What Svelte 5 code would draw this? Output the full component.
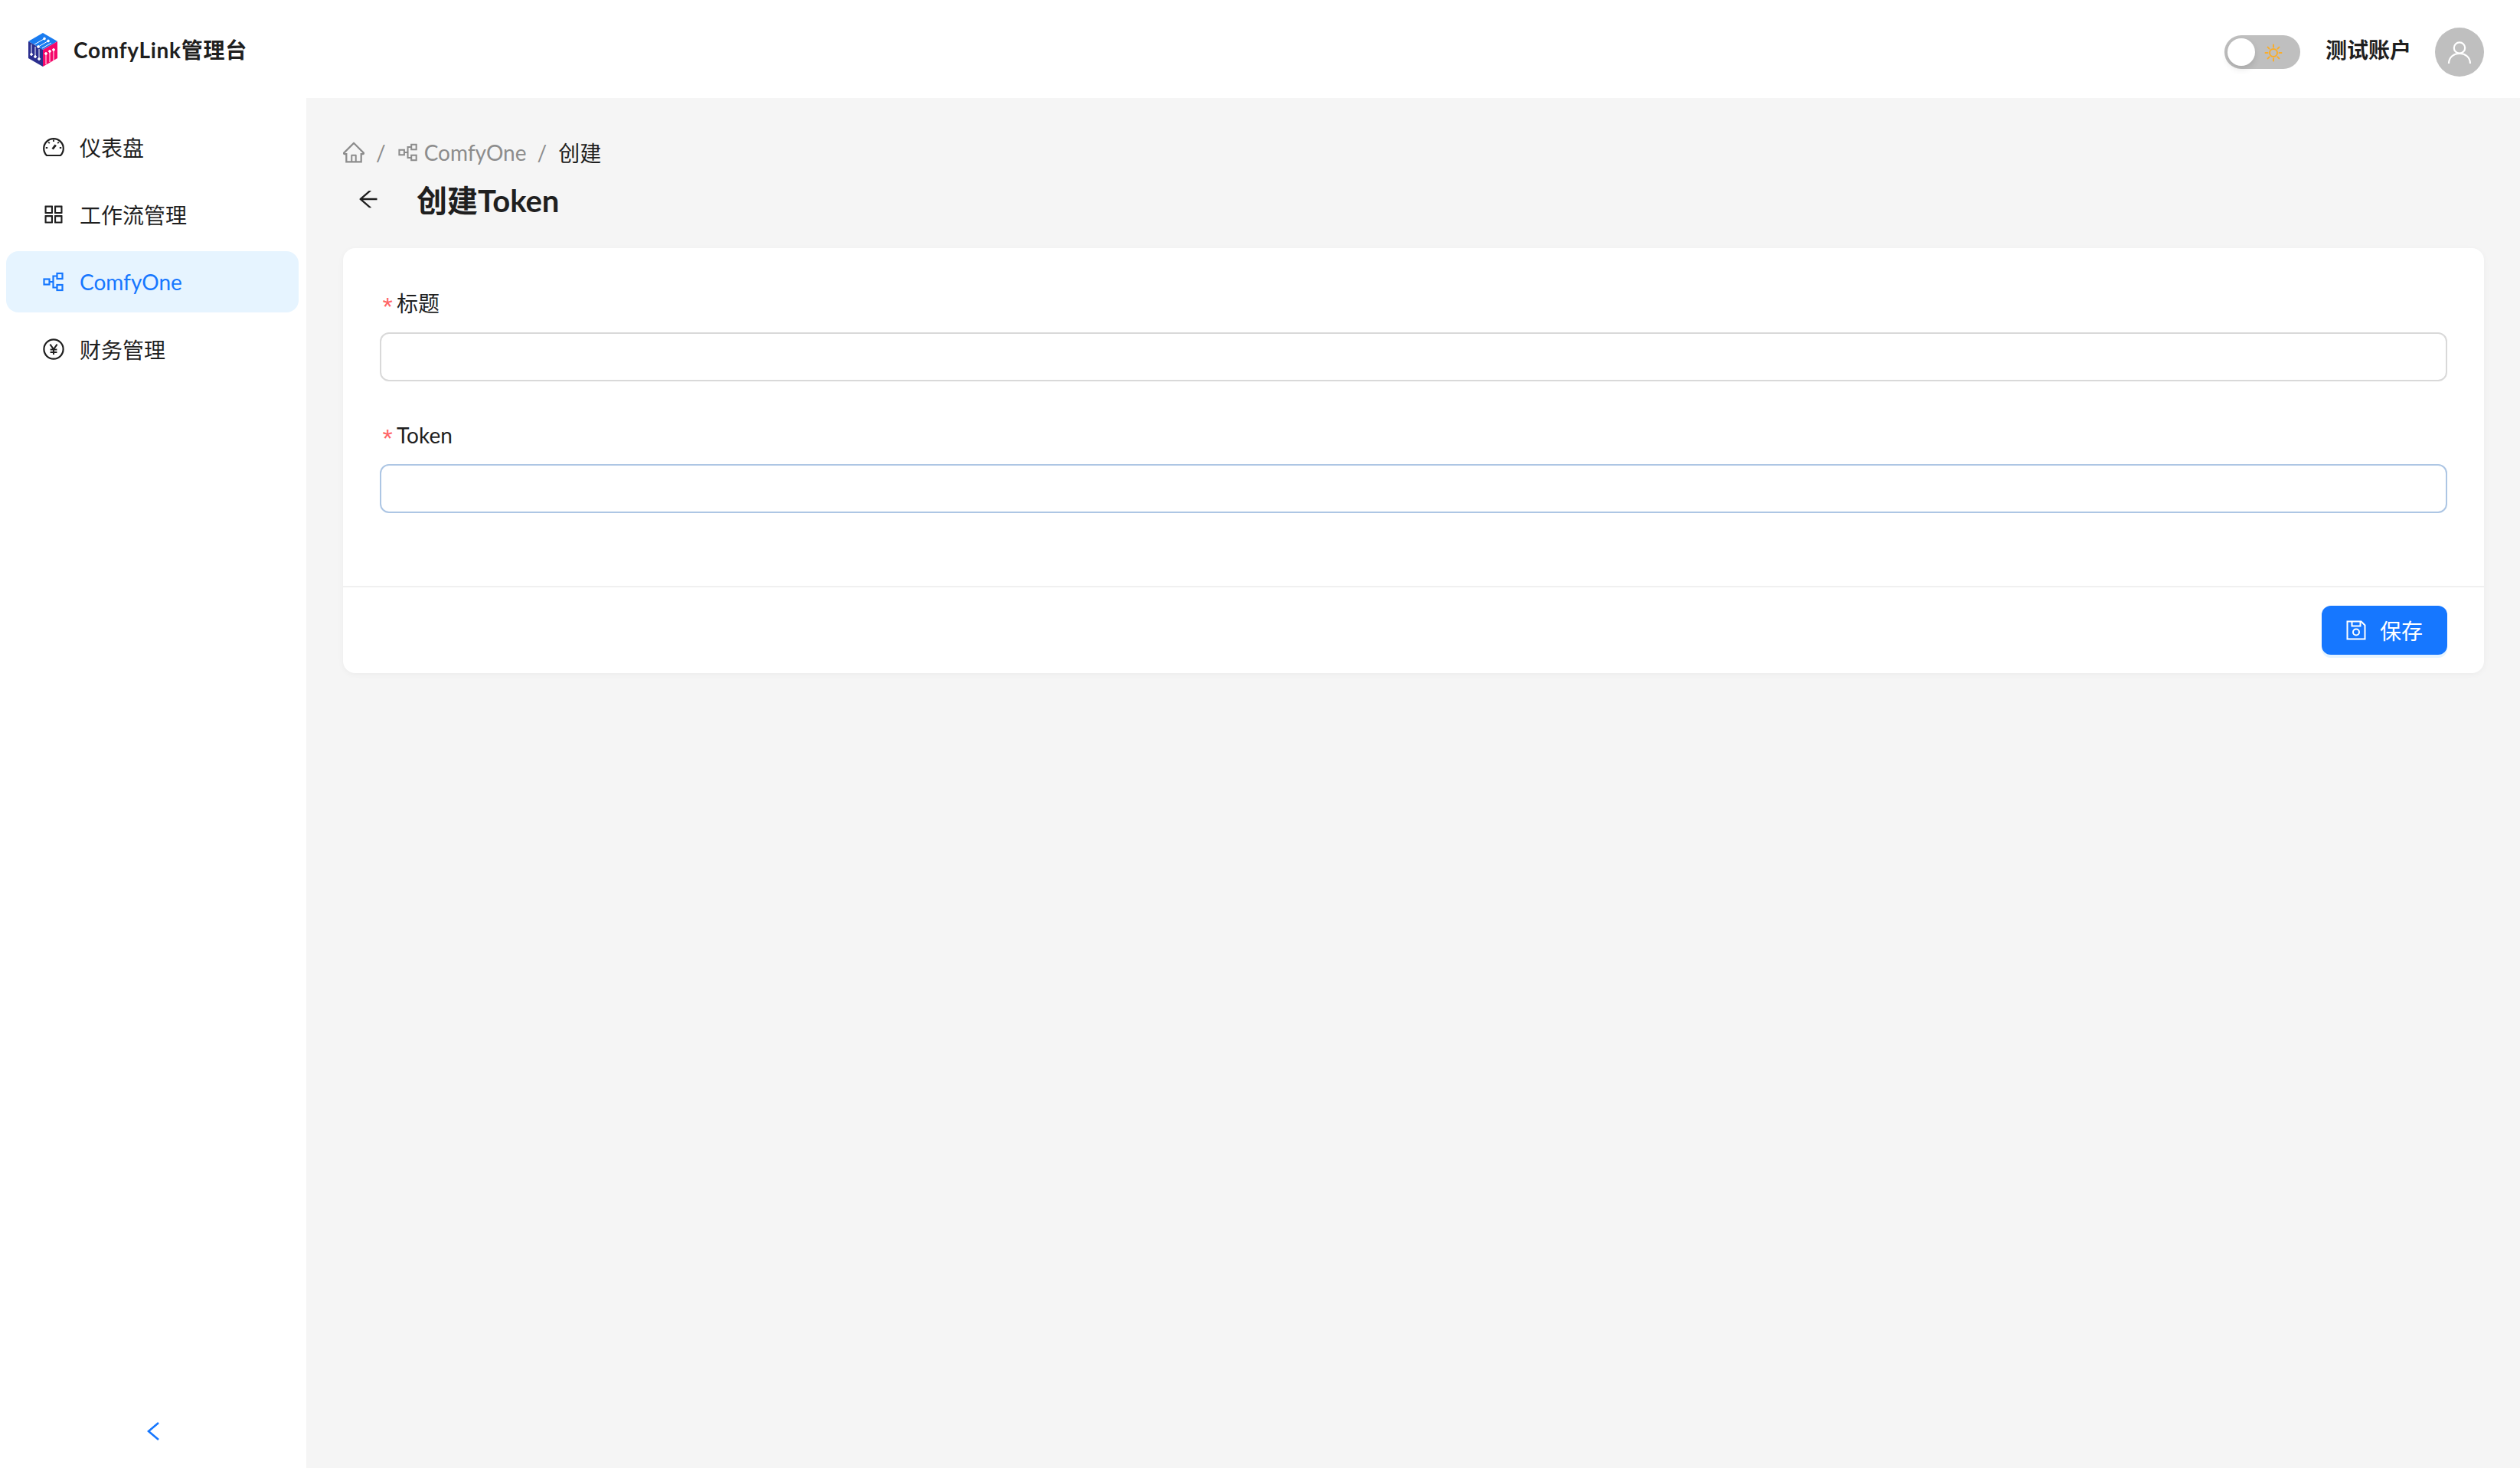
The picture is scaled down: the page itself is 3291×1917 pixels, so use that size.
<script>
  const menu = [
    { key: 'dashboard', label: '仪表盘' },
    { key: 'apps', label: '工作流管理' },
    { key: 'nodes', label: 'ComfyOne', active: true },
    { key: 'yen', label: '财务管理' }
  ];
</script>

{#snippet nodesIcon()}
  <svg class="icon" viewBox="0 0 28 28" fill="none" stroke="currentColor" stroke-width="2.2">
    <rect x="1.5" y="10.5" width="7" height="7" />
    <rect x="18.5" y="3" width="7" height="7" />
    <rect x="18.5" y="18" width="7" height="7" />
    <path d="M8.5 14h5M18.5 6.5h-5v15h5" />
  </svg>
{/snippet}

{#snippet menuIcon(key)}
  {#if key === 'dashboard'}
    <svg class="icon" viewBox="0 0 28 28" fill="none" stroke="currentColor" stroke-width="2.2">
      <path d="M5 25h18a12.8 12.8 0 1 0-18 0z" stroke-linejoin="round" />
      <path d="M12.6 16.6l4.2-5.2" stroke-width="2.8" />
      <path d="M14 4.5v2.4M7.2 7.6l1.6 1.6M20.8 7.6l-1.6 1.6M3.8 15h2.4M21.8 15h2.4" stroke-width="1.8" />
    </svg>
  {:else if key === 'apps'}
    <svg class="icon" viewBox="64 64 896 896" fill="currentColor">
      <path d="M464 144H160c-8.8 0-16 7.2-16 16v304c0 8.8 7.2 16 16 16h304c8.8 0 16-7.2 16-16V160c0-8.8-7.2-16-16-16zm-52 268H212V212h200v200zm452-268H560c-8.8 0-16 7.2-16 16v304c0 8.8 7.2 16 16 16h304c8.8 0 16-7.2 16-16V160c0-8.8-7.2-16-16-16zm-52 268H612V212h200v200zM464 544H160c-8.8 0-16 7.2-16 16v304c0 8.8 7.2 16 16 16h304c8.8 0 16-7.2 16-16V560c0-8.8-7.2-16-16-16zm-52 268H212V612h200v200zm452-268H560c-8.8 0-16 7.2-16 16v304c0 8.8 7.2 16 16 16h304c8.8 0 16-7.2 16-16V560c0-8.8-7.2-16-16-16zm-52 268H612V612h200v200z" />
    </svg>
  {:else if key === 'nodes'}
    {@render nodesIcon()}
  {:else}
    <svg class="icon" viewBox="0 0 28 28" fill="none" stroke="currentColor" stroke-width="2.2">
      <circle cx="14" cy="14" r="12.6" />
      <path d="M9.4 7.6l4.6 6.4 4.6-6.4M14 14v7M9.6 14.6h8.8M9.6 18h8.8" stroke-width="2" />
    </svg>
  {/if}
{/snippet}

<div class="layout">
  <header class="topbar">
    <div class="brand">
      <svg class="logo" viewBox="0 0 38 44">
        <path d="M19 0L38 11L19 22L0 11z" fill="#1a7cf0" />
        <path d="M0 11L19 22V44L0 33z" fill="#2b2f8f" />
        <path d="M38 11L19 22V44L38 33z" fill="#f5086a" />
        <g stroke="#fff" stroke-width="1" fill="#fff">
          <path d="M8 15l13-7.5M13 18l13-7.5M18 20l12-7" fill="none" />
          <circle cx="21" cy="7.5" r="1.4" /><circle cx="26" cy="10.5" r="1.4" /><circle cx="13" cy="18" r="1.4" />
          <path d="M4 15v13M9 18v13M14 21v13M23 27v14M28 24v14M33 22v14" fill="none" />
          <circle cx="4" cy="28" r="1.4" /><circle cx="9" cy="31" r="1.4" /><circle cx="14" cy="34" r="1.4" />
          <circle cx="23" cy="27" r="1.4" /><circle cx="28" cy="24" r="1.4" /><circle cx="33" cy="22" r="1.4" />
        </g>
      </svg>
      <span>ComfyLink管理台</span>
    </div>
    <div class="account">
      <div class="toggle">
        <span class="knob"></span>
        <svg class="sun" viewBox="0 0 24 24" fill="none" stroke="#faad29" stroke-width="2" stroke-linecap="round">
          <circle cx="12" cy="12" r="5" />
          <path d="M12 1.5v3M12 19.5v3M1.5 12h3M19.5 12h3M4.6 4.6l2 2M17.4 17.4l2 2M4.6 19.4l2-2M17.4 6.6l2-2" />
        </svg>
      </div>
      <span class="username">测试账户</span>
      <div class="avatar">
        <svg viewBox="0 0 32 32" fill="none" stroke="#fff" stroke-width="2.2">
          <circle cx="16" cy="10.5" r="7.2" />
          <path d="M2 31c0-7.6 6-13.2 14-13.2s14 5.6 14 13.2" />
        </svg>
      </div>
    </div>
  </header>

  <div class="body">
    <aside class="sidebar">
      <nav class="menu">
        {#each menu as item}
          <div class="item" class:active={item.active}>
            {@render menuIcon(item.key)}
            <span>{item.label}</span>
          </div>
        {/each}
      </nav>
      <div class="collapse">
        <svg viewBox="0 0 16 24" fill="none" stroke="#1677ff" stroke-width="2.6">
          <path d="M15 1L2 12l13 11" />
        </svg>
      </div>
    </aside>

    <main class="content">
      <div class="breadcrumb">
        <svg class="icon" viewBox="64 64 896 896" fill="currentColor">
          <path d="M946.5 505L560.1 118.8l-25.9-25.9a31.5 31.5 0 0 0-44.4 0L77.5 505a63.9 63.9 0 0 0-18.8 46c.4 35.2 29.7 63.3 64.9 63.3h42.5V940h691.8V614.3h43.4c17.1 0 33.2-6.7 45.3-18.8a63.6 63.6 0 0 0 18.7-45.3c0-17-6.7-33.1-18.8-45.2zM568 868H456V664h112v204zm217.9-325.7V868H632V640c0-22.1-17.9-40-40-40H432c-22.1 0-40 17.9-40 40v228H238.1V542.3h-96l370-369.7 23.1 23.1L882 542.3h-96.1z" />
        </svg>
        <span class="sep">/</span>
        <span class="crumb">{@render nodesIcon()}<span>ComfyOne</span></span>
        <span class="sep last">/</span>
        <span class="current">创建</span>
      </div>

      <div class="title">
        <svg class="back" viewBox="64 64 896 896" fill="currentColor">
          <path d="M872 474H286.9l350.2-304c5.6-4.9 2.2-14-5.2-14h-88.5c-3.9 0-7.6 1.4-10.5 3.9L155 487.8a31.96 31.96 0 0 0 0 48.3L535.1 866c1.5 1.3 3.3 2 5.2 2h91.5c7.4 0 10.8-9.2 5.2-14L286.9 550H872c4.4 0 8-3.6 8-8v-60c0-4.4-3.6-8-8-8z" />
        </svg>
        <h1>创建Token</h1>
      </div>

      <section class="card">
        <form class="fields" on:submit|preventDefault>
          <div class="field">
            <label for="title"><i>*</i>标题</label>
            <input id="title" type="text" />
          </div>
          <div class="field">
            <label for="token"><i>*</i>Token</label>
            <input id="token" class="focused" type="text" />
          </div>
        </form>
        <footer class="actions">
          <button type="button" class="save">
            <svg viewBox="0 0 26 26" fill="none" stroke="#fff" stroke-width="2">
              <path d="M1.5 1.5h18l5 5v18h-23z" />
              <path d="M7.5 1.5v6h11v-6" />
              <circle cx="13" cy="15.5" r="4" />
            </svg>
            <span>保存</span>
          </button>
        </footer>
      </section>
    </main>
  </div>
</div>

<style>
  :global(body) {
    margin: 0;
    background: #f5f5f5;
    color: #1f1f1f;
    font-family: Lato, "Noto Sans CJK SC", sans-serif;
    font-size: 28px;
  }
  .layout {
    display: flex;
    flex-direction: column;
    height: 1917px;
  }
  .topbar {
    height: 128px;
    flex: none;
    display: flex;
    align-items: center;
    justify-content: space-between;
    padding: 0 47px 0 37px;
    background: #fff;
  }
  .brand {
    display: flex;
    align-items: center;
    gap: 21px;
    font-weight: 700;
    letter-spacing: 0.7px;
  }
  .logo {
    width: 38px;
    height: 44px;
    margin-top: 2px;
  }
  .account {
    display: flex;
    align-items: center;
  }
  .toggle {
    position: relative;
    width: 99px;
    height: 44px;
    border-radius: 22px;
    background: #bfbfbf;
    margin-top: 8px;
  }
  .knob {
    position: absolute;
    left: 4px;
    top: 4px;
    width: 36px;
    height: 36px;
    border-radius: 50%;
    background: #fff;
    box-shadow: 0 4px 8px rgba(0, 0, 0, 0.12);
  }
  .sun {
    position: absolute;
    left: 52px;
    top: 11px;
    width: 24px;
    height: 24px;
  }
  .username {
    margin: 0 31px 0 33px;
    font-weight: 700;
  }
  .avatar {
    width: 64px;
    height: 64px;
    border-radius: 50%;
    background: #bfbfbf;
    display: flex;
    align-items: center;
    justify-content: center;
    overflow: hidden;
    margin-top: 8px;
  }
  .avatar svg {
    width: 32px;
    height: 32px;
  }
  .body {
    flex: 1;
    display: flex;
    min-height: 0;
  }
  .sidebar {
    width: 400px;
    flex: none;
    background: #fff;
    display: flex;
    flex-direction: column;
    justify-content: space-between;
  }
  .menu {
    display: flex;
    flex-direction: column;
    gap: 8px;
    padding: 24px 10px 0 8px;
  }
  .item {
    height: 80px;
    display: flex;
    align-items: center;
    gap: 20px;
    padding-left: 48px;
    border-radius: 16px;
  }
  .item.active {
    background: #e6f4ff;
    color: #1677ff;
  }
  .icon {
    width: 28px;
    height: 28px;
    flex: none;
  }
  .collapse {
    height: 96px;
    display: flex;
    align-items: center;
    justify-content: center;
  }
  .collapse svg {
    width: 16px;
    height: 24px;
  }
  .content {
    flex: 1;
    min-width: 0;
    padding: 49px 47px 0 48px;
  }
  .breadcrumb {
    display: flex;
    align-items: center;
    height: 44px;
    color: #8c8c8c;
  }
  .sep {
    margin: 0 16px 0 15px;
  }
  .sep.last {
    margin: 0 15px 0 14px;
  }
  .crumb {
    display: flex;
    align-items: center;
    gap: 8px;
  }
  .crumb .icon {
    width: 26px;
    height: 26px;
  }
  .current {
    color: #1f1f1f;
  }
  .title {
    display: flex;
    align-items: center;
    height: 64px;
    margin-top: 9px;
    padding-left: 19px;
  }
  .back {
    width: 28px;
    height: 28px;
    margin-top: -4px;
    flex: none;
  }
  h1 {
    margin: 0 0 0 49px;
    font-size: 40px;
    font-weight: 700;
    line-height: 64px;
  }
  .card {
    margin-top: 30px;
    background: #fff;
    border-radius: 16px;
    box-shadow: 0 2px 8px rgba(0, 0, 0, 0.04);
  }
  .fields {
    display: flex;
    flex-direction: column;
    gap: 48px;
    height: 443px;
    box-sizing: border-box;
    padding: 50px 48px 0;
    border-bottom: 2px solid #f0f0f0;
  }
  .field {
    display: flex;
    flex-direction: column;
  }
  label {
    height: 44px;
    line-height: 44px;
    margin-bottom: 16px;
  }
  label i {
    display: inline-block;
    width: 22px;
    font-style: normal;
    color: #ff6668;
    font-family: "Liberation Mono", monospace;
    font-size: 34px;
    line-height: 1;
    vertical-align: -6px;
  }
  input {
    height: 64px;
    box-sizing: border-box;
    border: 2px solid #d9d9d9;
    border-radius: 12px;
    background: #fff;
    outline: none;
    font: inherit;
  }
  input.focused {
    border-color: #adc6e4;
  }
  .actions {
    display: flex;
    justify-content: flex-end;
    padding: 24px 48px;
  }
  .save {
    width: 164px;
    height: 64px;
    display: flex;
    align-items: center;
    justify-content: center;
    gap: 18px;
    border: none;
    border-radius: 12px;
    background: #1677ff;
    color: #fff;
    font: inherit;
    box-shadow: 0 4px 0 rgba(5, 145, 255, 0.1);
  }
  .save svg {
    width: 26px;
    height: 26px;
  }
</style>
